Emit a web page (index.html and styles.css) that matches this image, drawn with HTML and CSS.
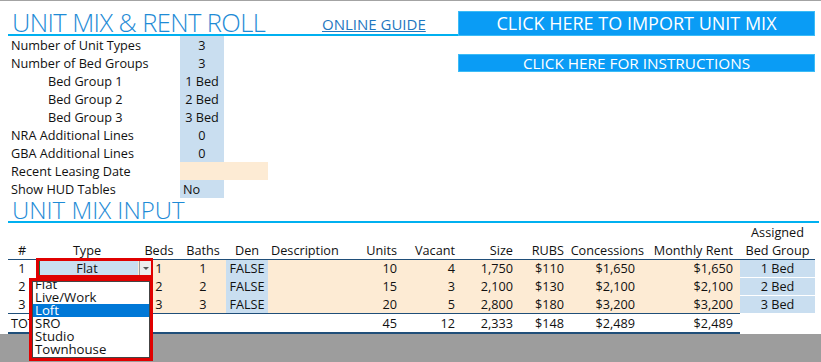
FILE: index.html
```html
<!DOCTYPE html>
<html lang="en">
<head>
    <meta charset="UTF-8">
    <title>Unit Mix &amp; Rent Roll</title>
    <link rel="stylesheet" href="styles.css">
</head>
<body>
    <div class="sheet">
        <!-- header + assumptions -->
        <div class="top">
            <div class="left">
                <div class="title-row">
                    <h1 class="title">UNIT MIX &amp; RENT ROLL</h1>
                    <a class="guide" href="#">ONLINE GUIDE</a>
                </div>
                <div class="info">
                    <div class="info-row"><span class="lbl">Number of Unit Types</span><span class="val">3</span></div>
                    <div class="info-row"><span class="lbl">Number of Bed Groups</span><span class="val">3</span></div>
                    <div class="info-row"><span class="lbl sub">Bed Group 1</span><span class="val">1 Bed</span></div>
                    <div class="info-row"><span class="lbl sub">Bed Group 2</span><span class="val">2 Bed</span></div>
                    <div class="info-row"><span class="lbl sub">Bed Group 3</span><span class="val">3 Bed</span></div>
                    <div class="info-row"><span class="lbl">NRA Additional Lines</span><span class="val">0</span></div>
                    <div class="info-row"><span class="lbl">GBA Additional Lines</span><span class="val">0</span></div>
                    <div class="info-row"><span class="lbl">Recent Leasing Date</span><span class="val date"></span></div>
                    <div class="info-row"><span class="lbl">Show HUD Tables</span><span class="val left">No</span></div>
                </div>
            </div>
            <div class="right">
                <div class="btn btn-big">CLICK HERE TO IMPORT UNIT MIX</div>
                <div class="btn btn-small">CLICK HERE FOR INSTRUCTIONS</div>
            </div>
        </div>

        <h2 class="section">UNIT MIX INPUT</h2>

        <!-- unit mix table -->
        <div class="grid-wrap">
            <table class="mix">
                <colgroup>
                    <col style="width:28px"><col style="width:102px"><col style="width:42px"><col style="width:46px">
                    <col style="width:42px"><col style="width:72px"><col style="width:60px"><col style="width:60px">
                    <col style="width:56px"><col style="width:51px"><col style="width:80px"><col style="width:93px">
                    <col style="width:75px">
                </colgroup>
                <tr class="r-top">
                    <td colspan="12"></td>
                    <td class="c">Assigned</td>
                </tr>
                <tr class="r-head">
                    <th class="c">#</th>
                    <th class="c">Type</th>
                    <th class="c">Beds</th>
                    <th class="c">Baths</th>
                    <th class="c">Den</th>
                    <th class="l">Description</th>
                    <th class="r">Units</th>
                    <th class="r vac">Vacant</th>
                    <th class="r">Size</th>
                    <th class="r">RUBS</th>
                    <th class="r">Concessions</th>
                    <th class="r rent">Monthly Rent</th>
                    <th class="c">Bed Group</th>
                </tr>
                <tr class="r-data">
                    <td class="c">1</td>
                    <td class="c type">Flat</td>
                    <td class="c in">1</td>
                    <td class="c in">1</td>
                    <td class="c den">FALSE</td>
                    <td class="in"></td>
                    <td class="r in">10</td>
                    <td class="r in vac">4</td>
                    <td class="r in">1,750</td>
                    <td class="r in">$110</td>
                    <td class="r in conc">$1,650</td>
                    <td class="r in rent">$1,650</td>
                    <td class="c grp">1 Bed</td>
                </tr>
                <tr class="r-data">
                    <td class="c">2</td>
                    <td class="c type">Studio</td>
                    <td class="c in">2</td>
                    <td class="c in">2</td>
                    <td class="c den">FALSE</td>
                    <td class="in"></td>
                    <td class="r in">15</td>
                    <td class="r in vac">3</td>
                    <td class="r in">2,100</td>
                    <td class="r in">$130</td>
                    <td class="r in conc">$2,100</td>
                    <td class="r in rent">$2,100</td>
                    <td class="c grp">2 Bed</td>
                </tr>
                <tr class="r-data last">
                    <td class="c">3</td>
                    <td class="c type">Loft</td>
                    <td class="c in">3</td>
                    <td class="c in">3</td>
                    <td class="c den">FALSE</td>
                    <td class="in"></td>
                    <td class="r in">20</td>
                    <td class="r in vac">5</td>
                    <td class="r in">2,800</td>
                    <td class="r in">$180</td>
                    <td class="r in conc">$3,200</td>
                    <td class="r in rent">$3,200</td>
                    <td class="c grp">3 Bed</td>
                </tr>
                <tr class="r-total">
                    <td class="l tot">TOTAL</td>
                    <td></td><td></td><td></td><td></td><td></td>
                    <td class="r">45</td>
                    <td class="r vac">12</td>
                    <td class="r">2,333</td>
                    <td class="r">$148</td>
                    <td class="r conc">$2,489</td>
                    <td class="r rent">$2,489</td>
                    <td class="nob"></td>
                </tr>
            </table>

            <!-- active cell + open validation list -->
            <div class="sel-frame"></div>
            <div class="dd-arrow"><span></span></div>
            <div class="dd-frame">
                <div class="dd-inner">
                    <ul class="dd-list">
                        <li>Flat</li>
                        <li>Live/Work</li>
                        <li class="on">Loft</li>
                        <li>SRO</li>
                        <li>Studio</li>
                        <li>Townhouse</li>
                    </ul>
                </div>
            </div>
        </div>
    </div>
    <div class="bottom-gray"></div>
</body>
</html>
```

FILE: styles.css
```css
html, body { height: 100%; overflow: hidden; }
body { margin: 0; border-top: 1px solid #a3a3a3; box-sizing: border-box; display: flex; flex-direction: column;
       font-family: "Open Sans", "Noto Sans", sans-serif; font-size: 12.7px; color: #111; }
.sheet { padding-left: 8px; }

.top { display: grid; grid-template-columns: 450px 357px; }
.title-row { display: grid; grid-template-columns: 314px 1fr; height: 33px; border-bottom: 2px solid #00b0f0; align-items: end; }
.title { margin: 0 0 -1px; padding-left: 4px; font-size: 25.5px; font-weight: 300; line-height: 1; letter-spacing: -0.6px;
         white-space: nowrap; color: #1e8bd6; }
.guide { padding-bottom: 2px; font-size: 15px; line-height: 1; color: #1f77c0; }

.info-row { display: grid; grid-template-columns: 172px auto; height: 18px; line-height: 18px; }
.lbl { padding-left: 3px; white-space: nowrap; }
.lbl.sub { padding-left: 40px; }
.val { width: 44px; background: #c9def0; text-align: center; }
.val.left { text-align: left; padding-left: 3px; box-sizing: border-box; }
.val.date { width: 88px; background: #fdebd4; }

.right { padding-top: 10px; }
.btn { box-sizing: border-box; background: #0a9cf5; border: 1px solid #3cbcf6; color: #fff; text-align: center; white-space: nowrap; }
.btn-big { height: 25px; font-size: 18px; line-height: 23px; }
.btn-small { height: 18px; margin-top: 18px; font-size: 15.3px; line-height: 16px; }

.section { margin: 0; width: 807px; height: 23px; border-bottom: 2px solid #00b0f0; padding-left: 4px; box-sizing: content-box;
           font-size: 24px; font-weight: 300; line-height: 23px; color: #1e8bd6; }

.grid-wrap { position: relative; }
.mix { border-collapse: collapse; table-layout: fixed; width: 807px; }
.mix td, .mix th { padding: 0 3px; white-space: nowrap; font-weight: normal; overflow: visible; }
.mix .c { text-align: center; }
.mix .l { text-align: left; }
.mix .r { text-align: right; }
.mix .vac { padding-right: 5px; }
.mix .rent { padding-right: 7px; }
.mix td.conc { padding-right: 12px; }
.r-top td { height: 18px; }
.r-head th { height: 18px; border-bottom: 1px solid #1f4e79; }
.r-data td { height: 17px; line-height: 17px; }
.r-data.last td { border-bottom: 1px solid #1f4e79; }
.r-data.last td.grp { border-bottom: 0; }
.mix td.in { background: #fdebd4; }
.mix td.den { background: #c9def0; }
.mix td.type { background: #c9def0; }
.mix td.grp { background: #c9def0; border-bottom: 1px solid #fff; }
.r-total td { height: 17px; border-bottom: 2px solid #1f4e79; }
.r-total td.nob { border-bottom: 0; }

.sel-frame { position: absolute; left: 28px; top: 35px; width: 117px; height: 20px; box-sizing: border-box;
             border: 3px solid #e00000; }
.sel-frame::before { content: ""; position: absolute; left: 0; top: 0; bottom: 0; width: 1px; background: #1d6b3a; }
.dd-arrow { position: absolute; left: 131px; top: 38px; width: 11px; height: 14px; background: #ececec; border-left: 1px solid #9a9a9a; }
.dd-arrow span { position: absolute; left: 3px; top: 6px; border-left: 3px solid transparent; border-right: 3px solid transparent; border-top: 3px solid #555; }

.dd-frame { position: absolute; left: 21px; top: 55px; width: 124px; height: 83px; box-sizing: border-box; border: 3px solid #e00000; }
.dd-inner { height: 100%; box-sizing: border-box; border: 1px solid #444; background: #fff; overflow: hidden; }
.dd-list { list-style: none; margin: -4px 0 0; padding: 0; font-size: 13.2px; }
.dd-list li { height: 13px; line-height: 13px; padding-left: 2px; }
.dd-list li.on { background: #0078d7; color: #fff; }

.bottom-gray { flex: 1; background: #9d9d9d; }
```
